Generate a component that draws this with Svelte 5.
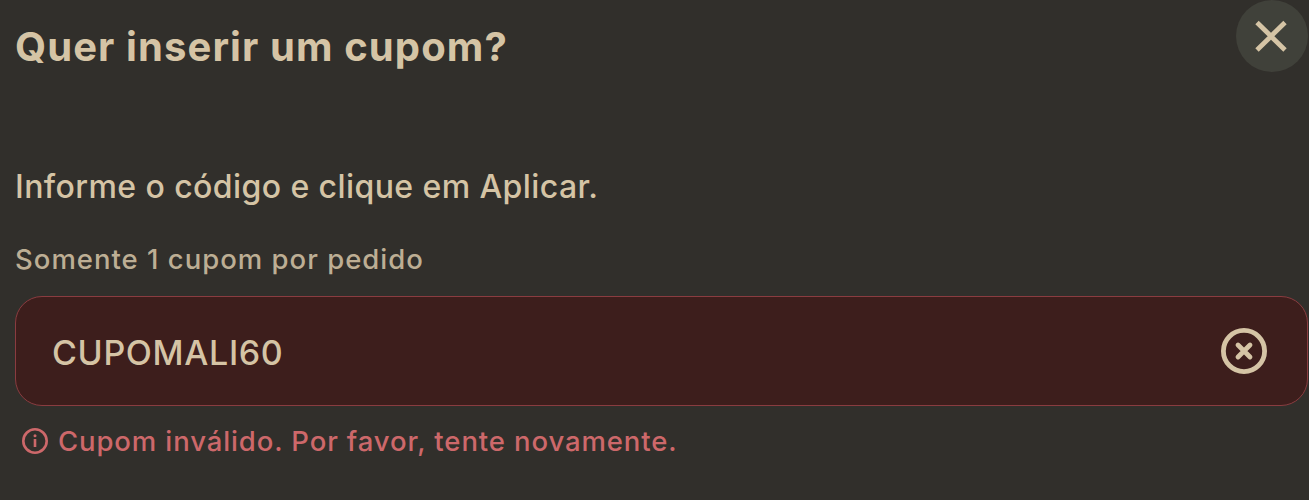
<script>
	let code = $state('CUPOMALI60');
	let open = $state(true);
	let invalid = $state(true);

	function clear() {
		code = '';
		invalid = false;
	}
</script>

{#if open}
	<main class="modal">
		<header>
			<h1>Quer inserir um cupom?</h1>
			<button class="close" aria-label="Fechar" onclick={() => (open = false)}>
				<svg width="72" height="72" viewBox="0 0 72 72">
					<path d="M21 22.5 49 50M49 22.5 21 50" />
				</svg>
			</button>
		</header>

		<p class="intro">Informe o código e clique em Aplicar.</p>
		<label for="coupon">Somente 1 cupom por pedido</label>
		<div class="field" class:invalid>
			<input id="coupon" type="text" autocomplete="off" spellcheck="false" bind:value={code} />
			<button class="clear" aria-label="Limpar" onclick={clear}>
				<svg width="46" height="46" viewBox="0 0 46 46">
					<circle cx="23" cy="23" r="20.6" />
					<path d="M17 17 29 29M29 17 17 29" />
				</svg>
			</button>
		</div>
		{#if invalid}
			<div class="error">
				<svg width="26" height="26" viewBox="0 0 26 26">
					<circle cx="13" cy="13" r="11.7" />
					<path d="M13 11V19" />
					<path class="dot" d="M13 7.7v.1" />
				</svg>
				<span>Cupom inválido. Por favor, tente novamente.</span>
			</div>
		{/if}
	</main>
{/if}

<style>
	:global(body) {
		background: #312f2b;
	}
	.modal {
		box-sizing: border-box;
		height: 500px;
		padding-left: 15px;
		overflow: hidden;
		font-family: Inter, sans-serif;
		font-weight: 500;
		color: #d5c4a5;
	}
	header {
		display: flex;
		justify-content: space-between;
		align-items: flex-start;
		height: 167px;
	}
	h1 {
		margin: 21px 0 0;
		font-size: 40px;
		line-height: 52px;
		font-weight: 700;
		letter-spacing: 1.1px;
		white-space: nowrap;
	}
	button {
		display: block;
		padding: 0;
		border: none;
		background: none;
		cursor: pointer;
	}
	svg {
		display: block;
		fill: none;
		stroke: #d5c4a5;
	}
	.close {
		width: 72px;
		height: 72px;
		margin-right: 1px;
		border-radius: 50%;
		background: #40413a;
	}
	.close svg {
		stroke-width: 4.8;
	}
	.intro {
		margin: 0 0 35px;
		font-size: 32px;
		line-height: 40px;
		letter-spacing: 0.42px;
	}
	label {
		display: block;
		margin-bottom: 20px;
		font-size: 27.5px;
		line-height: 34px;
		letter-spacing: 1px;
		color: #bdae94;
	}
	.field {
		box-sizing: border-box;
		display: flex;
		align-items: center;
		justify-content: space-between;
		height: 110px;
		margin-right: 1px;
		padding: 0 40px 0 36px;
		border: 1px solid #a09480;
		border-radius: 27px;
	}
	.field.invalid {
		border-color: #8a3c40;
		background: #3d1e1c;
	}
	input {
		flex: 1;
		min-width: 0;
		height: 60px;
		padding: 3px 0 0;
		border: none;
		outline: none;
		background: none;
		color: #d5c4a5;
		font-family: inherit;
		font-size: 34px;
		font-weight: 500;
		letter-spacing: 0.65px;
	}
	.clear svg {
		stroke-width: 4.8;
		stroke-linecap: round;
	}
	.error {
		display: flex;
		align-items: center;
		gap: 10px;
		margin: 18px 0 0 7px;
		font-size: 27.5px;
		line-height: 34px;
		letter-spacing: 0.88px;
		color: #cd686a;
	}
	.error svg {
		stroke: #cd686a;
		stroke-width: 2.6;
	}
	.error .dot {
		stroke-width: 3;
		stroke-linecap: round;
	}
</style>
